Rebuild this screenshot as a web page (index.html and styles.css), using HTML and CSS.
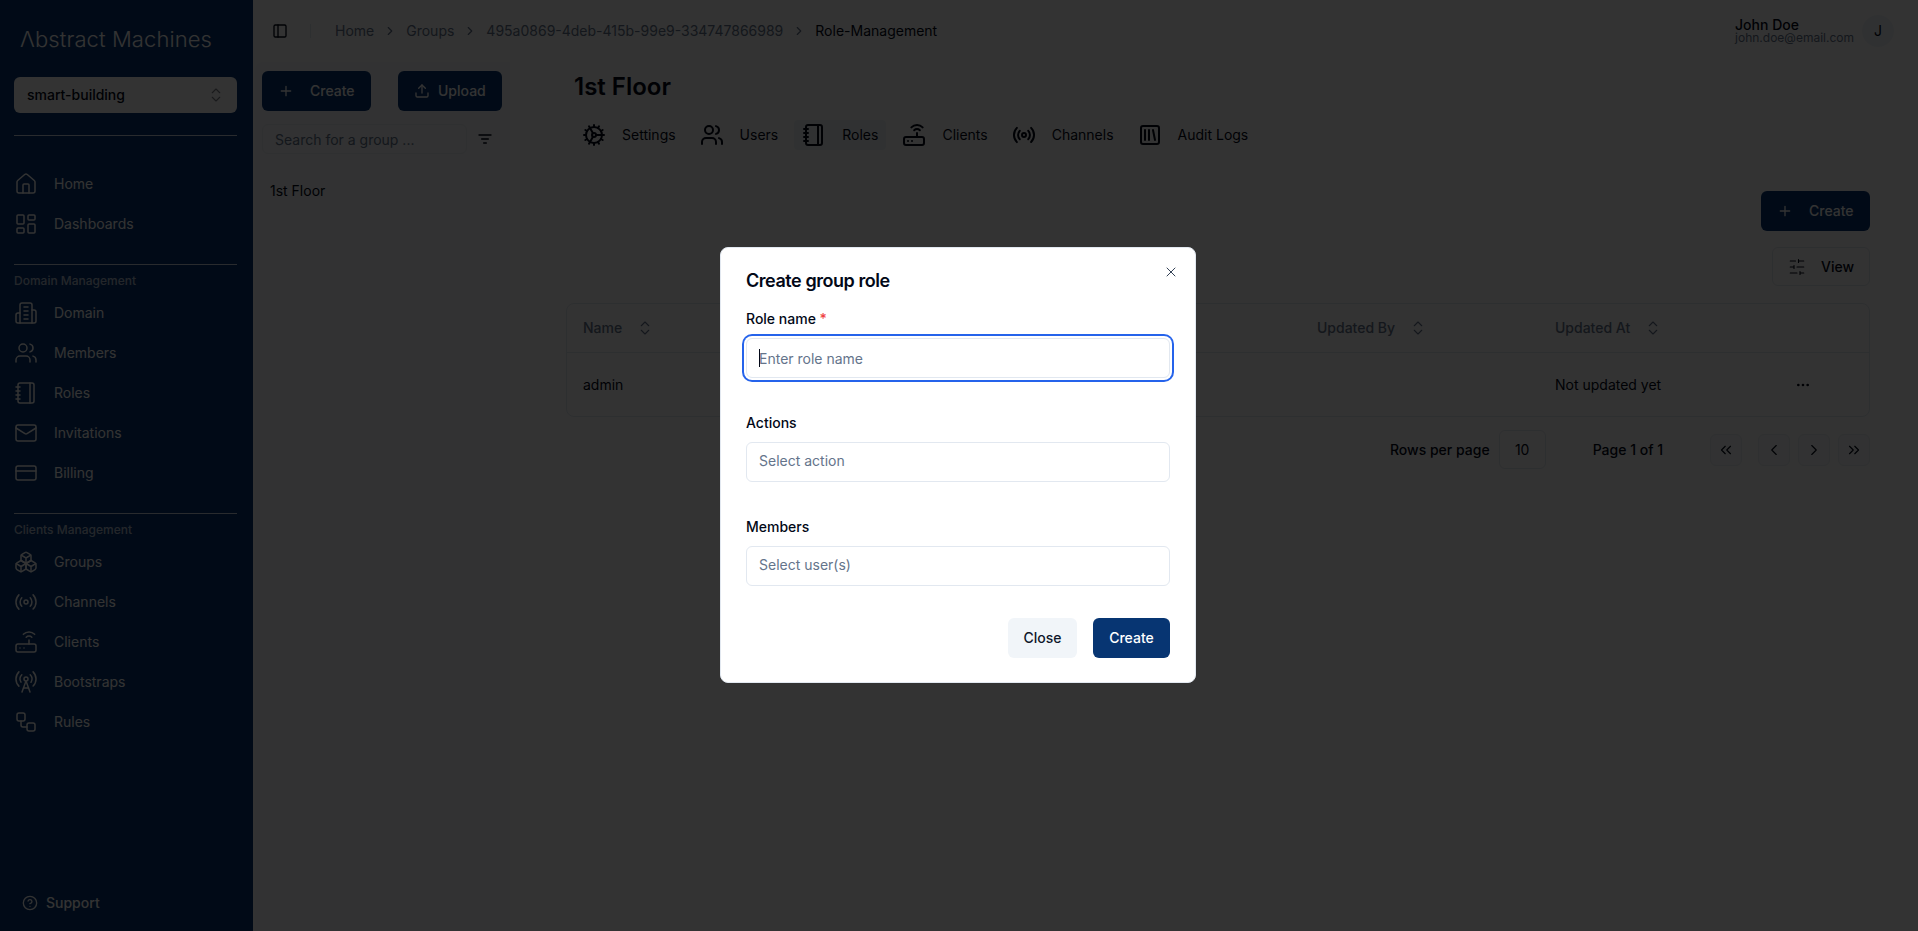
FILE: index.html
```html
<!DOCTYPE html>
<html>
  <head>
    <title>Role Management</title>
    <link rel="stylesheet" href="styles.css">
  </head>
  <body>
    <svg class="sprite">
      <symbol id="i-home" viewBox="0 0 24 24"><path d="M15 21v-8a1 1 0 0 0-1-1h-4a1 1 0 0 0-1 1v8"/><path d="M3 10a2 2 0 0 1 .709-1.528l7-5.999a2 2 0 0 1 2.582 0l7 5.999A2 2 0 0 1 21 10v9a2 2 0 0 1-2 2H5a2 2 0 0 1-2-2z"/></symbol>
      <symbol id="i-dash" viewBox="0 0 24 24"><rect x="3" y="3" width="7" height="9" rx="1"/><rect x="14" y="3" width="7" height="5" rx="1"/><rect x="14" y="12" width="7" height="9" rx="1"/><rect x="3" y="16" width="7" height="5" rx="1"/></symbol>
      <symbol id="i-domain" viewBox="0 0 24 24"><path d="M6 22V4a2 2 0 0 1 2-2h8a2 2 0 0 1 2 2v18Z"/><path d="M6 12H4a2 2 0 0 0-2 2v6a2 2 0 0 0 2 2h2"/><path d="M18 9h2a2 2 0 0 1 2 2v9a2 2 0 0 1-2 2h-2"/><path d="M10 6h4M10 10h4M10 14h4M10 18h4"/></symbol>
      <symbol id="i-users" viewBox="0 0 24 24"><path d="M16 21v-2a4 4 0 0 0-4-4H6a4 4 0 0 0-4 4v2"/><circle cx="9" cy="7" r="4"/><path d="M22 21v-2a4 4 0 0 0-3-3.87"/><path d="M16 3.13a4 4 0 0 1 0 7.75"/></symbol>
      <symbol id="i-roles" viewBox="0 0 24 24"><path d="M2 6h4M2 10h4M2 14h4M2 18h4"/><rect x="4" y="2" width="16" height="20" rx="2"/><path d="M16 2v20"/></symbol>
      <symbol id="i-mail" viewBox="0 0 24 24"><rect x="2" y="4" width="20" height="16" rx="2"/><path d="m22 7-8.97 5.7a1.94 1.94 0 0 1-2.06 0L2 7"/></symbol>
      <symbol id="i-card" viewBox="0 0 24 24"><rect x="2" y="5" width="20" height="14" rx="2"/><path d="M2 10h20"/></symbol>
      <symbol id="i-boxes" viewBox="0 0 24 24"><path d="M2.97 12.92A2 2 0 0 0 2 14.63v3.24a2 2 0 0 0 .97 1.71l3 1.8a2 2 0 0 0 2.06 0L12 19v-5.5l-5-3-4.03 2.42Z"/><path d="m7 16.5-4.74-2.85M7 16.5l5-3M7 16.5v5.17"/><path d="M12 13.5V19l3.97 2.38a2 2 0 0 0 2.06 0l3-1.8a2 2 0 0 0 .97-1.71v-3.24a2 2 0 0 0-.97-1.71L17 10.5l-5 3Z"/><path d="m17 16.5-5-3M17 16.5l4.74-2.85M17 16.5v5.17"/><path d="M7.97 4.42A2 2 0 0 0 7 6.13v4.37l5 3 5-3V6.13a2 2 0 0 0-.97-1.71l-3-1.8a2 2 0 0 0-2.06 0l-3 1.8Z"/><path d="M12 8 7.26 5.15M12 8l4.74-2.85M12 13.5V8"/></symbol>
      <symbol id="i-radio" viewBox="0 0 24 24"><path d="M4.9 19.1C1 15.2 1 8.8 4.9 4.9"/><path d="M7.8 16.2c-2.3-2.3-2.3-6.1 0-8.5"/><circle cx="12" cy="12" r="2"/><path d="M16.2 7.8c2.3 2.3 2.3 6.1 0 8.5"/><path d="M19.1 4.9C23 8.8 23 15.1 19.1 19"/></symbol>
      <symbol id="i-router" viewBox="0 0 24 24"><rect x="2" y="14" width="20" height="8" rx="2"/><path d="M6.01 18H6M10.01 18H10M15 10v4"/><path d="M17.84 7.17a4 4 0 0 0-5.66 0"/><path d="M20.66 4.34a8 8 0 0 0-11.31 0"/></symbol>
      <symbol id="i-tower" viewBox="0 0 24 24"><path d="M4.9 16.1C1 12.2 1 5.8 4.9 1.9"/><path d="M7.8 4.7a6.14 6.14 0 0 0-.8 7.5"/><circle cx="12" cy="9" r="2"/><path d="M16.2 4.8c2 2 2.26 5.11.8 7.47"/><path d="M19.1 1.9a9.96 9.96 0 0 1 0 14.1"/><path d="M9.5 18h5"/><path d="m8 22 4-11 4 11"/></symbol>
      <symbol id="i-flow" viewBox="0 0 24 24"><rect x="3" y="3" width="8" height="8" rx="2"/><path d="M7 11v4a2 2 0 0 0 2 2h4"/><rect x="13" y="13" width="8" height="8" rx="2"/></symbol>
      <symbol id="i-help" viewBox="0 0 24 24"><circle cx="12" cy="12" r="10"/><path d="M9.09 9a3 3 0 0 1 5.83 1c0 2-3 3-3 3"/><path d="M12 17h.01"/></symbol>
      <symbol id="i-panel" viewBox="0 0 24 24"><rect x="3" y="3" width="18" height="18" rx="2"/><path d="M9 3v18"/></symbol>
      <symbol id="i-library" viewBox="0 0 24 24"><rect x="3" y="3" width="18" height="18" rx="2"/><path d="M7 7v10M11 7v10M15 7l2 10"/></symbol>
      <symbol id="i-sliders" viewBox="0 0 24 24"><path d="M21 4h-7M10 4H3M21 12h-9M8 12H3M21 20h-5M12 20H3M14 2v4M8 10v4M16 18v4"/></symbol>
      <symbol id="i-filter" viewBox="0 0 24 24"><path d="M3 6h18M7 12h10M10 18h4"/></symbol>
      <symbol id="i-plus" viewBox="0 0 24 24"><path d="M5 12h14M12 5v14"/></symbol>
      <symbol id="i-upload" viewBox="0 0 24 24"><path d="M21 15v4a2 2 0 0 1-2 2H5a2 2 0 0 1-2-2v-4"/><path d="m17 8-5-5-5 5"/><path d="M12 3v12"/></symbol>
      <symbol id="i-updown" viewBox="0 0 24 24"><path d="m7 15 5 5 5-5"/><path d="m7 9 5-5 5 5"/></symbol>
      <symbol id="i-right" viewBox="0 0 24 24"><path d="m9 18 6-6-6-6"/></symbol>
      <symbol id="i-left" viewBox="0 0 24 24"><path d="m15 18-6-6 6-6"/></symbol>
      <symbol id="i-rights" viewBox="0 0 24 24"><path d="m6 17 5-5-5-5"/><path d="m13 17 5-5-5-5"/></symbol>
      <symbol id="i-lefts" viewBox="0 0 24 24"><path d="m11 17-5-5 5-5"/><path d="m18 17-5-5 5-5"/></symbol>
      <symbol id="i-close" viewBox="0 0 24 24"><path d="M18 6 6 18"/><path d="m6 6 12 12"/></symbol>
      <symbol id="i-dots" viewBox="0 0 24 24"><circle cx="5" cy="12" r="1"/><circle cx="12" cy="12" r="1"/><circle cx="19" cy="12" r="1"/></symbol>
      <symbol id="i-cog" viewBox="0 0 24 24"><path d="M12 20a8 8 0 1 0 0-16 8 8 0 0 0 0 16Z"/><path d="M12 14a2 2 0 1 0 0-4 2 2 0 0 0 0 4Z"/><path d="M12 2v2M12 22v-2M17 20.66l-1-1.73M11 10.27 7 3.34M20.66 17l-1.73-1M3.34 7l1.73 1M14 12h8M2 12h2M20.66 7l-1.73 1M3.34 17l1.73-1M17 3.34l-1 1.73M11 13.73l-4 6.93"/></symbol>
    </svg>

    <div class="page">
      <aside class="sidebar">
        <div class="logo">Λbstract Machines</div>
        <div class="domainSelect">
          <span>smart-building</span>
          <svg class="icon icon18 selectIcon"><use href="#i-updown"/></svg>
        </div>
        <div class="sideRule firstRule"></div>
        <nav class="navGroup">
          <a class="navItem"><svg class="icon"><use href="#i-home"/></svg>Home</a>
          <a class="navItem"><svg class="icon"><use href="#i-dash"/></svg>Dashboards</a>
        </nav>
        <div class="sideRule"></div>
        <div class="navTitle">Domain Management</div>
        <nav class="navGroup">
          <a class="navItem"><svg class="icon"><use href="#i-domain"/></svg>Domain</a>
          <a class="navItem"><svg class="icon"><use href="#i-users"/></svg>Members</a>
          <a class="navItem"><svg class="icon"><use href="#i-roles"/></svg>Roles</a>
          <a class="navItem"><svg class="icon"><use href="#i-mail"/></svg>Invitations</a>
          <a class="navItem"><svg class="icon"><use href="#i-card"/></svg>Billing</a>
        </nav>
        <div class="sideRule"></div>
        <div class="navTitle">Clients Management</div>
        <nav class="navGroup">
          <a class="navItem"><svg class="icon"><use href="#i-boxes"/></svg>Groups</a>
          <a class="navItem"><svg class="icon"><use href="#i-radio"/></svg>Channels</a>
          <a class="navItem"><svg class="icon"><use href="#i-router"/></svg>Clients</a>
          <a class="navItem"><svg class="icon"><use href="#i-tower"/></svg>Bootstraps</a>
          <a class="navItem"><svg class="icon"><use href="#i-flow"/></svg>Rules</a>
        </nav>
        <a class="support"><svg class="icon icon16"><use href="#i-help"/></svg>Support</a>
      </aside>

      <div class="mainColumn">
        <header class="topBar">
          <svg class="icon icon16 toggle"><use href="#i-panel"/></svg>
          <span class="topRule"></span>
          <div class="crumbs">
            <span>Home</span>
            <svg class="icon crumbSep"><use href="#i-right"/></svg>
            <span>Groups</span>
            <svg class="icon crumbSep"><use href="#i-right"/></svg>
            <span>495a0869-4deb-415b-99e9-334747866989</span>
            <svg class="icon crumbSep"><use href="#i-right"/></svg>
            <span class="crumbNow">Role-Management</span>
          </div>
          <div class="userBox">
            <div class="userText">
              <div class="userName">John Doe</div>
              <div class="userMail">john.doe@email.com</div>
            </div>
            <div class="avatar">J</div>
          </div>
        </header>

        <div class="body">
          <section class="groupPanel">
            <div class="groupActions">
              <button class="btnDark createGroup"><svg class="icon icon16"><use href="#i-plus"/></svg>Create</button>
              <button class="btnDark uploadGroup"><svg class="icon icon16"><use href="#i-upload"/></svg>Upload</button>
            </div>
            <div class="groupSearch">
              <div class="searchBox">Search for a group ...</div>
              <svg class="icon icon16 filterIcon"><use href="#i-filter"/></svg>
            </div>
            <div class="groupName">1st Floor</div>
          </section>

          <main class="content">
            <h1 class="pageTitle">1st Floor</h1>
            <div class="tabs">
              <a class="tab"><svg class="icon"><use href="#i-cog"/></svg>Settings</a>
              <a class="tab"><svg class="icon"><use href="#i-users"/></svg>Users</a>
              <a class="tab tabActive"><svg class="icon"><use href="#i-roles"/></svg>Roles</a>
              <a class="tab"><svg class="icon"><use href="#i-router"/></svg>Clients</a>
              <a class="tab"><svg class="icon"><use href="#i-radio"/></svg>Channels</a>
              <a class="tab"><svg class="icon"><use href="#i-library"/></svg>Audit Logs</a>
            </div>
            <div class="toolRow">
              <button class="btnDark createRole"><svg class="icon icon16"><use href="#i-plus"/></svg>Create</button>
            </div>
            <div class="toolRow viewRow">
              <button class="viewBtn"><svg class="icon icon18"><use href="#i-sliders"/></svg>View</button>
            </div>
            <div class="table">
              <div class="tableRow tableHead">
                <div class="cell">Name <svg class="icon icon18"><use href="#i-updown"/></svg></div>
                <div class="cell">Updated By <svg class="icon icon18"><use href="#i-updown"/></svg></div>
                <div class="cell">Updated At <svg class="icon icon18"><use href="#i-updown"/></svg></div>
                <div class="cell"></div>
              </div>
              <div class="tableRow tableBody">
                <div class="cell">admin</div>
                <div class="cell"></div>
                <div class="cell">Not updated yet</div>
                <div class="cell cellDots"><svg class="icon icon16"><use href="#i-dots"/></svg></div>
              </div>
            </div>
            <div class="pager">
              <span class="pagerLabel rowsLabel">Rows per page</span>
              <div class="pageSize">10</div>
              <span class="pagerLabel pageCount">Page 1 of 1</span>
              <div class="pageBtn firstBtn"><svg class="icon icon18"><use href="#i-lefts"/></svg></div>
              <div class="pageBtn"><svg class="icon icon18"><use href="#i-left"/></svg></div>
              <div class="pageBtn"><svg class="icon icon18"><use href="#i-right"/></svg></div>
              <div class="pageBtn"><svg class="icon icon18"><use href="#i-rights"/></svg></div>
            </div>
          </main>
        </div>
      </div>
    </div>

    <div class="overlay">
      <div class="modal">
        <svg class="icon icon16 modalClose"><use href="#i-close"/></svg>
        <h2 class="modalTitle">Create group role</h2>
        <div class="field">
          <label class="fieldLabel">Role name <span class="required">*</span></label>
          <div class="inputWrap">
            <input class="fieldInput fieldFocus" placeholder="Enter role name">
            <span class="caret"></span>
          </div>
        </div>
        <div class="field">
          <label class="fieldLabel">Actions</label>
          <input class="fieldInput fieldSelect" placeholder="Select action">
        </div>
        <div class="field">
          <label class="fieldLabel">Members</label>
          <input class="fieldInput fieldSelect" placeholder="Select user(s)">
        </div>
        <div class="modalFooter">
          <button class="btnClose">Close</button>
          <button class="btnCreate">Create</button>
        </div>
      </div>
    </div>
  </body>
</html>
```

FILE: styles.css
```css
*{
  box-sizing: border-box;
}
html, body{
  height: 100%;
}
body{
  margin: 0;
  overflow: hidden;
  background-color: #fff;
  color: #020817;
  font-family: "Inter", "Liberation Sans", sans-serif;
  font-size: 14px;
  line-height: 20px;
}
.sprite{
  display: none;
}
.icon{
  width: 24px;
  height: 24px;
  flex: none;
  fill: none;
  stroke: currentColor;
  stroke-width: 1.5;
  stroke-linecap: round;
  stroke-linejoin: round;
}
.icon16{
  width: 16px;
  height: 16px;
  stroke-width: 2;
}
.icon18{
  width: 18px;
  height: 18px;
}
.page{
  display: flex;
  height: 931px;
}

/* sidebar */
.sidebar{
  width: 253px;
  flex: none;
  display: flex;
  flex-direction: column;
  padding: 0 16px 0 14px;
  background-color: #073572;
  color: #fff;
}
.logo{
  height: 77px;
  padding: 24px 0 0 6px;
  font-size: 22px;
  line-height: 31px;
  font-weight: 300;
  letter-spacing: .1px;
  white-space: nowrap;
}
.domainSelect{
  height: 36px;
  display: flex;
  align-items: center;
  justify-content: space-between;
  padding: 0 12px 0 13px;
  border-radius: 6px;
  background-color: #fff;
  color: #020817;
  font-weight: 500;
}
.selectIcon{
  opacity: .5;
}
.sideRule{
  height: 1px;
  margin-top: 20px;
  background-color: rgba(255,255,255,.8);
}
.firstRule{
  margin-top: 22px;
}
.firstRule + .navGroup{
  margin-top: 28px;
}
.navTitle{
  height: 28px;
  padding-top: 8px;
  font-size: 12px;
  line-height: 16px;
  font-weight: 500;
  color: rgba(255,255,255,.7);
}
.navItem{
  height: 40px;
  display: flex;
  align-items: center;
  gap: 16px;
}
.support{
  margin-top: auto;
  margin-bottom: 18px;
  height: 20px;
  display: flex;
  align-items: center;
  gap: 8px;
  padding-left: 8px;
  font-weight: 500;
}

/* top bar */
.mainColumn{
  flex: 1;
  min-width: 0;
  display: flex;
  flex-direction: column;
}
.topBar{
  height: 62px;
  flex: none;
  display: flex;
  align-items: center;
  padding: 0 24px 0 19px;
}
.topRule{
  width: 1px;
  height: 14px;
  margin: 0 24px 0 22px;
  background-color: #e2e8f0;
}
.crumbs{
  display: flex;
  align-items: center;
  gap: 9px;
  color: #64748b;
}
.crumbSep{
  width: 14px;
  height: 14px;
  stroke-width: 2;
}
.crumbNow{
  color: #020817;
}
.userBox{
  margin-left: auto;
  display: flex;
  align-items: center;
  gap: 8px;
}
.userName{
  font-weight: 500;
  line-height: 14px;
  color: #020817;
}
.userMail{
  font-size: 12px;
  line-height: 12px;
  color: #64748b;
}
.avatar{
  width: 32px;
  height: 32px;
  display: flex;
  align-items: center;
  justify-content: center;
  border-radius: 50%;
  background-color: #f1f5f9;
}

/* groups panel */
.body{
  flex: 1;
  min-height: 0;
  display: flex;
}
.groupPanel{
  width: 255px;
  flex: none;
  margin-left: 2px;
  padding: 9px 8px 0 7px;
  background-color: #f8fafc;
  border-top-left-radius: 8px;
}
.groupActions{
  display: flex;
  justify-content: space-between;
}
.btnDark{
  height: 40px;
  display: inline-flex;
  align-items: center;
  border: none;
  border-radius: 6px;
  background-color: #073572;
  color: #fff;
  font: inherit;
  font-weight: 500;
}
.createGroup{
  width: 109px;
  gap: 16px;
  padding-left: 16px;
}
.uploadGroup{
  width: 104px;
  gap: 8px;
  padding-left: 16px;
}
.groupSearch{
  display: flex;
  align-items: center;
  margin-top: 13px;
}
.searchBox{
  width: 205px;
  height: 30px;
  line-height: 29px;
  padding-left: 12px;
  border: 1px solid #e9eef4;
  border-radius: 6px;
  color: #64748b;
}
.filterIcon{
  margin-left: 10px;
}
.groupName{
  margin: 27px 0 0 8px;
}

/* page content */
.content{
  flex: 1;
  min-width: 0;
  padding: 9px 48px 0 56px;
}
.pageTitle{
  margin: 0 0 0 8px;
  font-size: 24px;
  line-height: 32px;
  font-weight: 600;
}
.tabs{
  display: flex;
  gap: 8px;
  margin: 17px 0 0 8px;
}
.tab{
  height: 30px;
  display: flex;
  align-items: center;
  gap: 16px;
  padding: 0 8px;
  border-radius: 4px;
}
.tab .icon{
  stroke-width: 2;
}
.tabActive{
  background-color: #f1f5f9;
}
.toolRow{
  display: flex;
  justify-content: flex-end;
  margin-top: 41px;
}
.createRole{
  width: 109px;
  gap: 16px;
  padding-left: 16px;
}
.viewRow{
  margin-top: 16px;
}
.viewBtn{
  width: 98px;
  height: 39px;
  display: flex;
  align-items: center;
  gap: 15px;
  padding-left: 15px;
  border: 1px solid #e2e8f0;
  border-radius: 6px;
  background: none;
  color: #020817;
  font: inherit;
  font-weight: 500;
}
.table{
  margin-top: 17px;
  border: 1px solid #e2e8f0;
  border-radius: 8px;
}
.tableRow{
  display: grid;
  grid-template-columns: 734px 238px 248px 1fr;
  align-items: center;
}
.tableHead{
  height: 49px;
  border-bottom: 1px solid #e2e8f0;
  color: #64748b;
  font-weight: 500;
}
.tableBody{
  height: 63px;
}
.cell{
  display: flex;
  align-items: center;
  gap: 14px;
  padding-left: 16px;
}
.cellDots{
  padding-left: 8px;
}
.pager{
  display: flex;
  align-items: center;
  justify-content: flex-end;
  gap: 8px;
  margin-top: 13px;
  height: 39px;
}
.pagerLabel{
  font-weight: 500;
}
.rowsLabel{
  margin-right: 1px;
}
.pageSize{
  width: 47px;
  height: 39px;
  line-height: 37px;
  text-align: center;
  border: 1px solid #e2e8f0;
  border-radius: 6px;
}
.pageCount{
  margin: 0 39px 0 39px;
}
.pageBtn{
  width: 32px;
  height: 32px;
  display: flex;
  align-items: center;
  justify-content: center;
  border: 1px solid #e8edf3;
  border-radius: 6px;
  background-color: #f8fafc;
}
.firstBtn{
  margin-right: 8px;
}

/* dialog */
.overlay{
  position: fixed;
  inset: 0;
  display: flex;
  align-items: center;
  justify-content: center;
  background-color: rgba(0,0,0,.8);
}
.modal{
  position: relative;
  width: 476px;
  height: 436px;
  margin: 0 2px 1px 0;
  padding: 19px 25px 0;
  border: 1px solid #e2e8f0;
  border-radius: 8px;
  background-color: #fff;
}
.modalClose{
  position: absolute;
  top: 16px;
  right: 16px;
  color: #334155;
  stroke-width: 1.5;
}
.modalTitle{
  margin: 0 0 14px;
  font-size: 18px;
  line-height: 28px;
  font-weight: 600;
  letter-spacing: -.45px;
}
.field{
  margin-bottom: 35px;
}
.fieldLabel{
  display: block;
  margin-bottom: 9px;
  font-weight: 500;
}
.required{
  color: #ef4444;
}
.inputWrap{
  position: relative;
}
.caret{
  position: absolute;
  left: 13px;
  top: 11px;
  width: 1px;
  height: 18px;
  background-color: #020817;
}
.fieldInput{
  display: block;
  width: 100%;
  height: 40px;
  padding: 0 12px;
  border: 1px solid #e2e8f0;
  border-radius: 6px;
  outline: none;
  background-color: #fff;
  color: #020817;
  font: inherit;
}
.fieldSelect{
  padding-bottom: 3px;
}
.fieldInput::placeholder{
  color: #64748b;
}
.fieldFocus{
  box-shadow: 0 0 0 2px #fff, 0 0 0 4px #2563eb;
}
.modalFooter{
  display: flex;
  justify-content: flex-end;
  gap: 16px;
  margin-top: -3px;
}
.btnClose, .btnCreate{
  height: 40px;
  border: none;
  border-radius: 6px;
  font: inherit;
  font-weight: 500;
}
.btnClose{
  width: 69px;
  background-color: #f1f5f9;
  color: #0f172a;
}
.btnCreate{
  width: 77px;
  background-color: #073572;
  color: #fff;
}
```
